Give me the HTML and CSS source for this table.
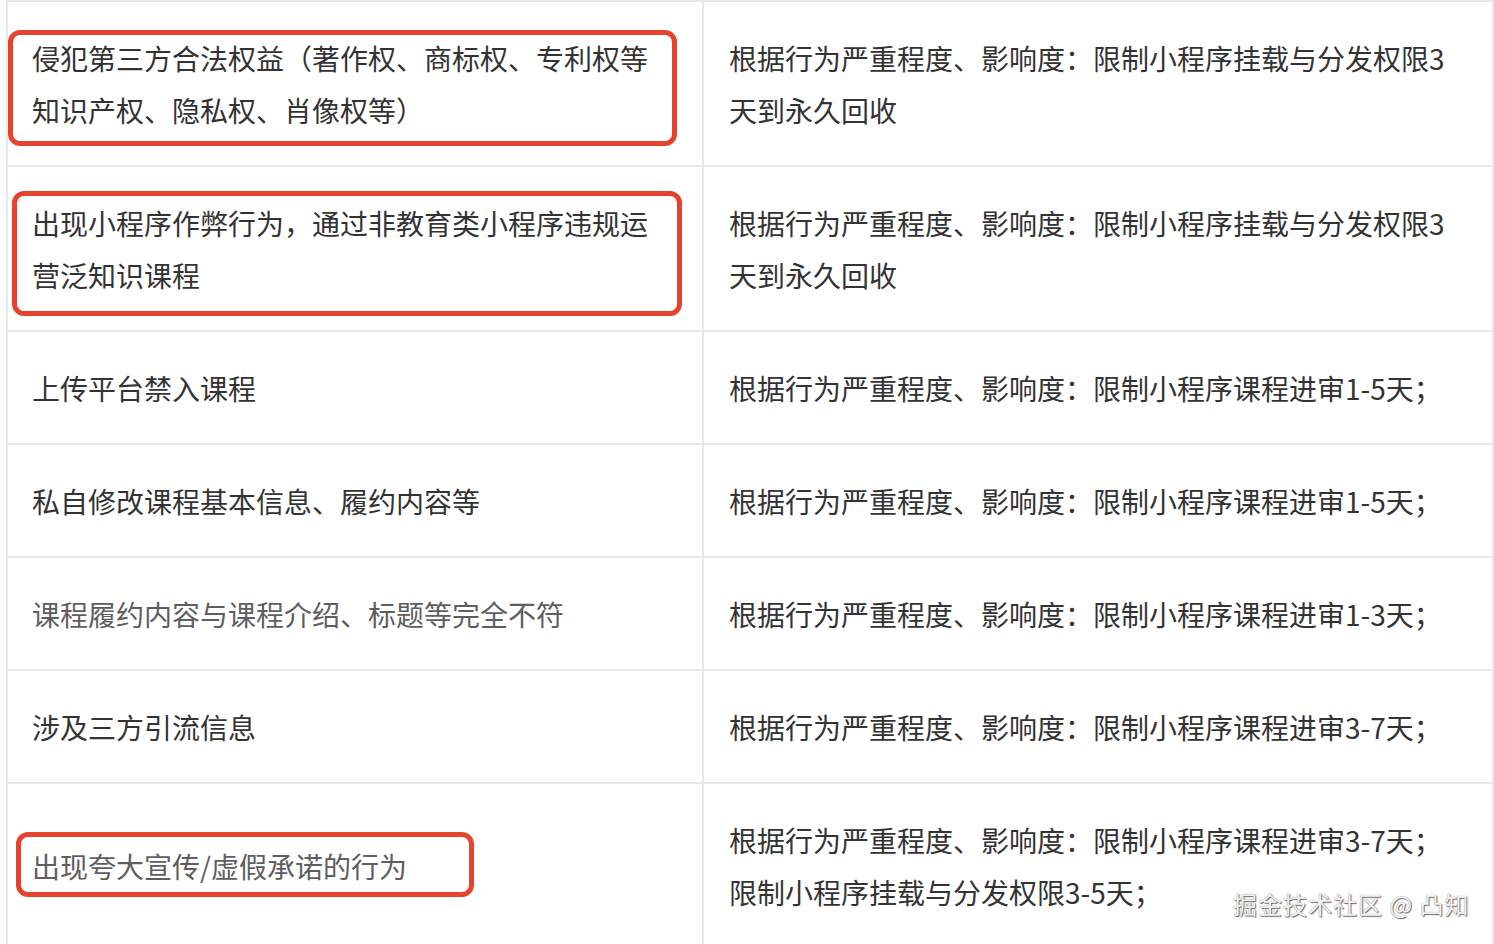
FILE: index.html
```html
<!DOCTYPE html>
<html lang="zh-CN">
<head>
<meta charset="utf-8">
<title>小程序违规处理</title>
<link rel="stylesheet" href="styles.css">
</head>
<body>
<div class="table">
  <div class="row">
    <div class="cell left"><span class="mark mark-1"></span><p>侵犯第三方合法权益（著作权、商标权、专利权等知识产权、隐私权、肖像权等）</p></div>
    <div class="cell right"><p>根据行为严重程度、影响度：限制小程序挂载与分发权限3天到永久回收</p></div>
  </div>
  <div class="row">
    <div class="cell left"><span class="mark mark-2"></span><p>出现小程序作弊行为，通过非教育类小程序违规运营泛知识课程</p></div>
    <div class="cell right"><p>根据行为严重程度、影响度：限制小程序挂载与分发权限3天到永久回收</p></div>
  </div>
  <div class="row">
    <div class="cell left"><p>上传平台禁入课程</p></div>
    <div class="cell right"><p>根据行为严重程度、影响度：限制小程序课程进审1-5天；</p></div>
  </div>
  <div class="row">
    <div class="cell left"><p>私自修改课程基本信息、履约内容等</p></div>
    <div class="cell right"><p>根据行为严重程度、影响度：限制小程序课程进审1-5天；</p></div>
  </div>
  <div class="row">
    <div class="cell left muted"><p>课程履约内容与课程介绍、标题等完全不符</p></div>
    <div class="cell right"><p>根据行为严重程度、影响度：限制小程序课程进审1-3天；</p></div>
  </div>
  <div class="row">
    <div class="cell left"><p>涉及三方引流信息</p></div>
    <div class="cell right"><p>根据行为严重程度、影响度：限制小程序课程进审3-7天；</p></div>
  </div>
  <div class="row">
    <div class="cell left muted"><span class="mark mark-3"></span><p>出现夸大宣传/虚假承诺的行为</p></div>
    <div class="cell right"><p>根据行为严重程度、影响度：限制小程序课程进审3-7天；<br>限制小程序挂载与分发权限3-5天；</p></div>
  </div>
</div>
<div class="watermark">掘金技术社区 @ 凸知</div>
</body>
</html>
```
FILE: styles.css
```css
html, body {
  margin: 0;
  padding: 0;
  background: #ffffff;
}

body {
  position: relative;
  font-family: "Noto Sans CJK SC", "Noto Sans", "Liberation Sans", sans-serif;
  color: #333333;
}

.table {
  box-sizing: border-box;
  width: 1488px;
  margin-left: 6px;
  border-top: 2px solid #e8e8e8;
  border-left: 2px solid #e8e8e8;
}

.row {
  display: grid;
  grid-template-columns: 696px 790px;
}

.cell {
  position: relative;
  display: flex;
  align-items: center;
  box-sizing: border-box;
  border-right: 2px solid #e8e8e8;
  border-bottom: 2px solid #e8e8e8;
  font-size: 28px;
  line-height: 52px;
}

.cell p {
  margin: 0;
  position: relative;
}

.left {
  padding: 30px 30px 29px 24px;
}

.right {
  padding: 30px 25px 29px 25px;
}

.muted {
  color: #5e5e5e;
}

.mark {
  position: absolute;
  box-sizing: border-box;
  border: 5px solid #e5432d;
  border-radius: 12px;
}

.mark-1 {
  left: 0;
  top: 28px;
  width: 669px;
  height: 116px;
}

.mark-2 {
  left: 4px;
  top: 24px;
  width: 670px;
  height: 125px;
}

.mark-3 {
  left: 8px;
  top: 48px;
  width: 458px;
  height: 65px;
}

.watermark {
  position: absolute;
  left: 1233px;
  top: 889px;
  font-size: 24px;
  line-height: 30px;
  letter-spacing: 1px;
  color: #f2f2f2;
  text-shadow: 1px 1px 1px #6a6a6a, 0 0 1px #777777;
  white-space: nowrap;
}
```
